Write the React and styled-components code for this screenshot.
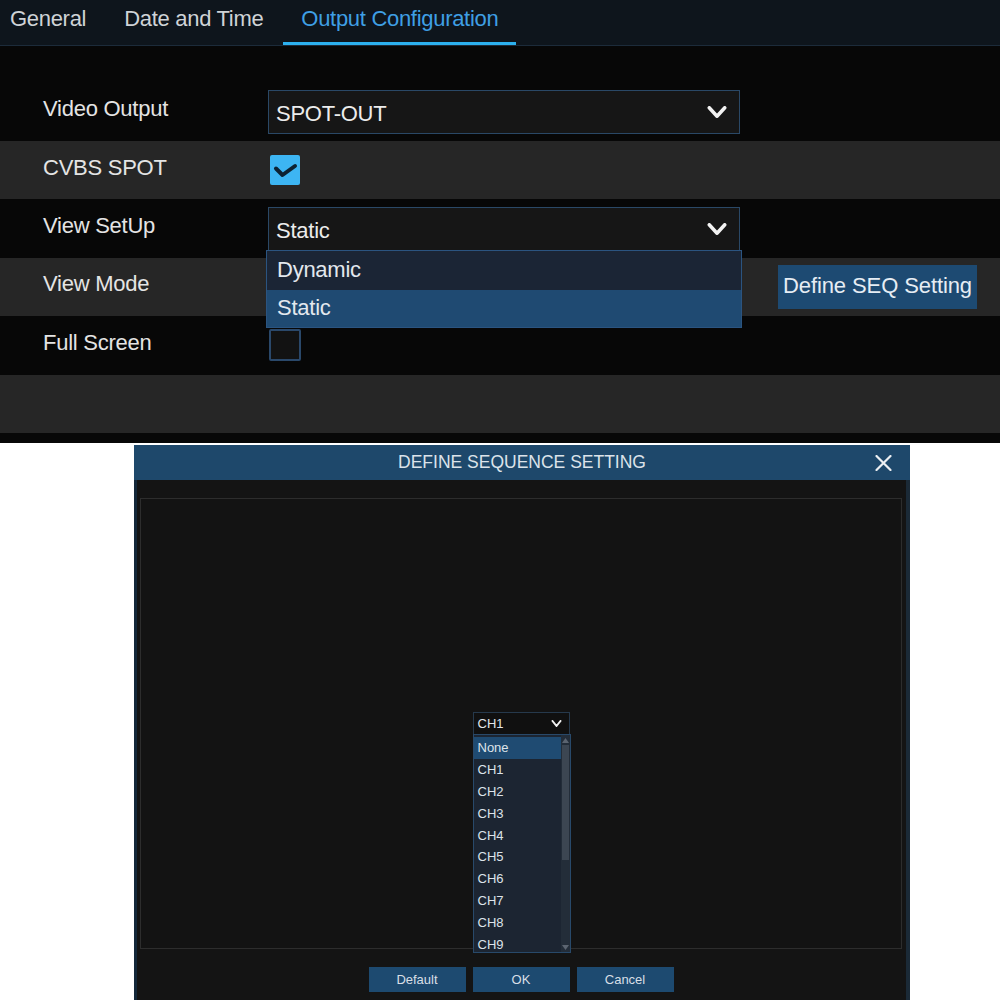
import React from 'react';
import styled, { createGlobalStyle } from 'styled-components';

const Global = createGlobalStyle`
  html, body { margin: 0; padding: 0; background: #ffffff; }
  body { font-family: "Liberation Sans", Arial, sans-serif; }
  #root { width: 1000px; height: 1000px; overflow: hidden; }
  * { box-sizing: border-box; }
`;

const Page = styled.div`
  width: 1000px;
  height: 1000px;
  display: flex;
  flex-direction: column;
  overflow: hidden;
  background: #ffffff;
`;

/* ---------- top screen ---------- */
const TopScreen = styled.section`
  height: 443px;
  flex-shrink: 0;
  background: #070707;
  display: flex;
  flex-direction: column;
`;

const TabBar = styled.nav`
  height: 46px;
  background: #0e151c;
  border-bottom: 1px solid #1c2b3a;
  display: flex;
  gap: 2px;
`;

const Tab = styled.div`
  height: 45px;
  padding: 8px 18px 0;
  font-size: 22px;
  line-height: 22px;
  letter-spacing: -0.3px;
  color: ${(p) => (p.$active ? '#3f9fe4' : '#cfd3d7')};
  border-bottom: 3px solid ${(p) => (p.$active ? '#2cb0ee' : 'transparent')};
  white-space: nowrap;
  &:first-child { padding-left: 10px; }
`;

const Settings = styled.div`
  padding-top: 36.6px;
  display: flex;
  flex-direction: column;
`;

const Row = styled.div`
  height: 58.4px;
  display: flex;
  align-items: center;
  padding-left: 43px;
  background: ${(p) => (p.$shade ? '#262626' : '#070707')};
`;

const Label = styled.div`
  width: 225px;
  flex-shrink: 0;
  padding-bottom: 5px;
  font-size: 22px;
  letter-spacing: -0.25px;
  color: #e4e4e4;
  white-space: nowrap;
`;

const Select = styled.div`
  position: relative;
  width: 472px;
  height: 44px;
  background: #161616;
  border: 1px solid #2a4866;
  display: flex;
  align-items: center;
  justify-content: space-between;
  padding: 0 12px 0 7px;
  font-size: 22px;
  letter-spacing: -0.25px;
  color: #ececec;
`;

const SelectText = styled.span`
  padding-top: 5px;
`;

const Menu = styled.div`
  position: absolute;
  top: 100%;
  left: -3px;
  right: -3px;
  border: 1px solid #2b5480;
  display: flex;
  flex-direction: column;
  z-index: 5;
`;

const MenuItem = styled.div`
  height: ${(p) => p.$h}px;
  display: flex;
  align-items: center;
  padding-left: 10px;
  background: ${(p) => (p.$selected ? '#1f4a72' : '#1b2535')};
  color: #e3e8ee;
`;

const Spacer = styled.div`
  width: ${(p) => p.$w}px;
  flex-shrink: 0;
`;

const SeqButton = styled.div`
  width: 199px;
  height: 44px;
  margin-left: 38px;
  background: #1d4a72;
  color: #e6edf4;
  font-size: 22px;
  letter-spacing: -0.1px;
  display: flex;
  align-items: center;
  justify-content: center;
  padding-bottom: 2px;
  white-space: nowrap;
`;

const CheckBox = styled.div`
  width: ${(p) => (p.$checked ? 30 : 32)}px;
  height: ${(p) => (p.$checked ? 30 : 32)}px;
  margin-left: ${(p) => (p.$checked ? 2 : 1)}px;
  border-radius: 2px;
  background: ${(p) => (p.$checked ? '#3db5f3' : '#121212')};
  border: ${(p) => (p.$checked ? 'none' : '2px solid #2a486a')};
  display: flex;
  align-items: center;
  justify-content: center;
`;

/* ---------- dialog ---------- */
const DialogArea = styled.div`
  flex: 1;
  padding: 2px 0 0 134px;
  background: #ffffff;
`;

const Dialog = styled.div`
  width: 776px;
  height: 555px;
  display: flex;
  flex-direction: column;
`;

const DialogHeader = styled.header`
  height: 35px;
  flex-shrink: 0;
  background: #1e486b;
  display: grid;
  grid-template-columns: 1fr auto 1fr;
  align-items: center;
`;

const DialogTitle = styled.div`
  grid-column: 2;
  font-size: 17.5px;
  color: #dce3ea;
  white-space: nowrap;
`;

const CloseBtn = styled.div`
  grid-column: 3;
  justify-self: end;
  margin-right: 18px;
  width: 17px;
  height: 16px;
  display: flex;
`;

const DialogBody = styled.div`
  flex: 1;
  background: #141414;
  border-left: 3px solid #14283a;
  border-right: 4px solid #1b2a37;
  padding: 18px 4px 8px 3px;
  display: flex;
  flex-direction: column;
`;

const Panel = styled.div`
  height: 451px;
  border: 1px solid #2d2d2d;
  background: #131313;
  display: flex;
  align-items: center;
  justify-content: center;
`;

const ChannelSelect = styled.div`
  position: relative;
  width: 97px;
  height: 23px;
  border: 1px solid #26394c;
  background: #101010;
  display: flex;
  align-items: center;
  justify-content: space-between;
  padding: 0 7px 0 4px;
  font-size: 13px;
  color: #e2e6ea;
`;

const ChannelList = styled.div`
  position: absolute;
  top: 100%;
  left: -1px;
  right: -2px;
  height: 219px;
  border: 1px solid #28496a;
  background: #1c2532;
  display: grid;
  grid-template-columns: 1fr 9px;
  overflow: hidden;
  z-index: 5;
`;

const Items = styled.div`
  padding-top: 2px;
  display: flex;
  flex-direction: column;
  overflow: hidden;
`;

const ChannelItem = styled.div`
  height: 21.8px;
  flex-shrink: 0;
  display: flex;
  align-items: center;
  padding-left: 4px;
  font-size: 13px;
  color: #dde3ea;
  background: ${(p) => (p.$selected ? '#1f4b72' : 'transparent')};
`;

const ScrollTrack = styled.div`
  background: #232d39;
  display: flex;
  flex-direction: column;
`;

const ScrollArrow = styled.div`
  height: 10px;
  display: flex;
  align-items: center;
  justify-content: center;
`;

const ScrollThumb = styled.div`
  height: 115px;
  margin: 0 1px;
  background: #3c4652;
`;

const ScrollFill = styled.div`
  flex: 1;
`;

const ButtonRow = styled.div`
  margin-top: 18px;
  display: flex;
  justify-content: center;
  gap: 7px;
`;

const DlgButton = styled.div`
  width: 97px;
  height: 25px;
  background: #1d4a70;
  color: #d8dfe6;
  font-size: 13px;
  display: flex;
  align-items: center;
  justify-content: center;
`;

const Chevron = ({ w = 20, h = 12, sw = 3.5 }) => (
  <svg width={w} height={h} viewBox={`0 0 ${w} ${h}`}>
    <polyline
      points={`${sw / 2 + 0.5},${sw / 2} ${w / 2},${h - sw / 2} ${w - sw / 2 - 0.5},${sw / 2}`}
      fill="none"
      stroke="#f2f2f2"
      strokeWidth={sw}
      strokeLinecap="round"
      strokeLinejoin="round"
    />
  </svg>
);

const Check = () => (
  <svg width="30" height="30" viewBox="0 0 30 30">
    <polyline
      points="6,13.5 12.5,20 25,11"
      fill="none"
      stroke="#0d2233"
      strokeWidth="4"
      strokeLinecap="round"
      strokeLinejoin="round"
    />
  </svg>
);

const Triangle = ({ up }) => (
  <svg width="7" height="5" viewBox="0 0 7 5">
    <polygon points={up ? '0,5 3.5,0 7,5' : '0,0 7,0 3.5,5'} fill="#5b6470" />
  </svg>
);

const channels = ['None', 'CH1', 'CH2', 'CH3', 'CH4', 'CH5', 'CH6', 'CH7', 'CH8', 'CH9'];

export default function App() {
  return (
    <Page>
      <Global />
      <TopScreen>
        <TabBar>
          <Tab>General</Tab>
          <Tab>Date and Time</Tab>
          <Tab $active>Output Configuration</Tab>
        </TabBar>
        <Settings>
          <Row>
            <Label>Video Output</Label>
            <Select>
              <SelectText>SPOT-OUT</SelectText>
              <Chevron />
            </Select>
          </Row>
          <Row $shade>
            <Label>CVBS SPOT</Label>
            <CheckBox $checked>
              <Check />
            </CheckBox>
          </Row>
          <Row>
            <Label>View SetUp</Label>
            <Select>
              <SelectText>Static</SelectText>
              <Chevron />
              <Menu>
                <MenuItem $h={39}>Dynamic</MenuItem>
                <MenuItem $h={37} $selected>Static</MenuItem>
              </Menu>
            </Select>
          </Row>
          <Row $shade>
            <Label>View Mode</Label>
            <Spacer $w={472} />
            <SeqButton>Define SEQ Setting</SeqButton>
          </Row>
          <Row>
            <Label>Full Screen</Label>
            <CheckBox />
          </Row>
          <Row $shade />
        </Settings>
      </TopScreen>

      <DialogArea>
        <Dialog>
          <DialogHeader>
            <DialogTitle>DEFINE SEQUENCE SETTING</DialogTitle>
            <CloseBtn>
              <svg width="17" height="16" viewBox="0 0 17 16">
                <path d="M1.5 1 L15.5 15 M15.5 1 L1.5 15" stroke="#eceff2" strokeWidth="2.2" strokeLinecap="round" />
              </svg>
            </CloseBtn>
          </DialogHeader>
          <DialogBody>
            <Panel>
              <ChannelSelect>
                <span>CH1</span>
                <Chevron w={11} h={7} sw={2} />
                <ChannelList>
                  <Items>
                    {channels.map((c, i) => (
                      <ChannelItem key={c} $selected={i === 0}>
                        {c}
                      </ChannelItem>
                    ))}
                  </Items>
                  <ScrollTrack>
                    <ScrollArrow>
                      <Triangle up />
                    </ScrollArrow>
                    <ScrollThumb />
                    <ScrollFill />
                    <ScrollArrow>
                      <Triangle />
                    </ScrollArrow>
                  </ScrollTrack>
                </ChannelList>
              </ChannelSelect>
            </Panel>
            <ButtonRow>
              <DlgButton>Default</DlgButton>
              <DlgButton>OK</DlgButton>
              <DlgButton>Cancel</DlgButton>
            </ButtonRow>
          </DialogBody>
        </Dialog>
      </DialogArea>
    </Page>
  );
}
